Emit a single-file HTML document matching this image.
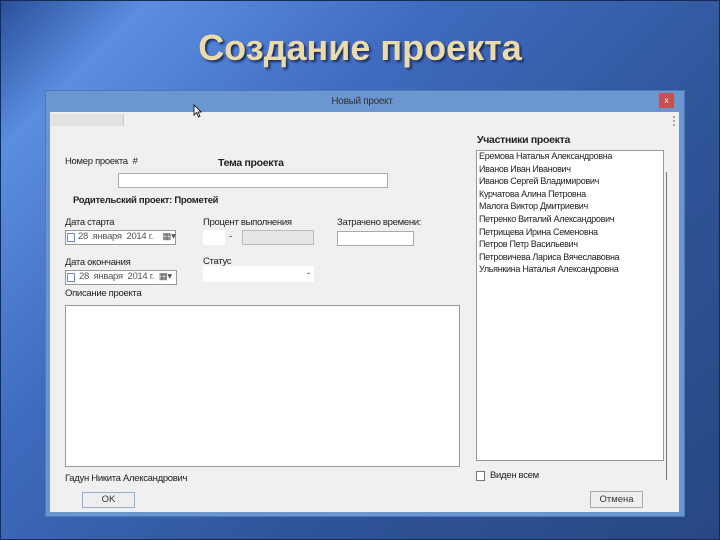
<!DOCTYPE html>
<html><head><meta charset="utf-8"><style>
*{margin:0;padding:0;box-sizing:border-box}
body{width:720px;height:540px;overflow:hidden;position:relative;font-family:"Liberation Sans","DejaVu Sans",sans-serif;
background:linear-gradient(135deg,#2a4f9a 0%,#5b8ee0 12%,#3f6bbf 35%,#2f5599 65%,#274784 100%);}
.a{position:absolute}
.t{font-size:9.5px;color:#222;white-space:nowrap;letter-spacing:-0.3px}
.b{font-weight:bold}
.box{background:#fff;border:1px solid #aaa}
</style></head><body>
<div class="a" style="left:0;top:0;width:720px;height:540px;border:1px solid #152a55"></div>
<div class="a" style="left:0;top:27px;width:720px;text-align:center;font-size:36px;font-weight:bold;color:#ecdba8;text-shadow:2px 2px 2px #1a2f60;letter-spacing:0px">Создание проекта</div>
<!-- window -->
<div class="a" style="left:45px;top:90px;width:640px;height:427px;background:#6b96cf;border:1px solid #4f79b5"></div>
<div class="a t" style="left:0;width:724px;top:96px;text-align:center;font-size:10px;color:#333">Новый проект</div>
<div class="a" style="left:659px;top:93px;width:15px;height:15px;background:#c75050;color:#fff;font-size:8px;text-align:center;line-height:15px">x</div>
<div class="a" style="left:50px;top:112px;width:629px;height:400px;background:#f0f0f0"></div>
<div class="a" style="left:51px;top:114px;width:73px;height:12px;background:#e2e2e2;border-right:1px solid #ccc"></div>
<div class="a" style="left:669px;top:116px;width:6px;height:10px;border-right:2px dotted #aaa"></div>
<!-- left -->
<div class="a t" style="left:65px;top:156px">Номер проекта &nbsp;#</div>
<div class="a t b" style="left:218px;top:157px;font-size:10.5px">Тема проекта</div>
<div class="a box" style="left:118px;top:173px;width:270px;height:15px"></div>
<div class="a t b" style="left:73px;top:195px">Родительский проект: Прометей</div>
<div class="a t" style="left:65px;top:217px">Дата старта</div>
<div class="a box" style="left:65px;top:230px;width:111px;height:15px;border-color:#999"></div>
<div class="a" style="left:67px;top:233px;width:8px;height:9px;border:1px solid #6a8fbf"></div>
<div class="a t" style="left:78px;top:231px;color:#555">28 &nbsp;января &nbsp;2014 г. &nbsp;&nbsp;&nbsp;▦▾</div>
<div class="a t" style="left:203px;top:217px">Процент выполнения</div>
<div class="a" style="left:203px;top:230px;width:22px;height:15px;background:#fff"></div>
<div class="a t" style="left:229px;top:231px">-</div>
<div class="a" style="left:242px;top:230px;width:72px;height:15px;background:#e6e6e6;border:1px solid #bbb"></div>
<div class="a t" style="left:337px;top:217px">Затрачено времени:</div>
<div class="a box" style="left:337px;top:231px;width:77px;height:15px"></div>
<div class="a t" style="left:65px;top:257px">Дата окончания</div>
<div class="a box" style="left:65px;top:270px;width:112px;height:15px;border-color:#999"></div>
<div class="a" style="left:67px;top:273px;width:8px;height:9px;border:1px solid #6a8fbf"></div>
<div class="a t" style="left:79px;top:271px;color:#555">28 &nbsp;января &nbsp;2014 г. &nbsp;▦▾</div>
<div class="a t" style="left:203px;top:256px">Статус</div>
<div class="a" style="left:203px;top:266px;width:111px;height:16px;background:#fff"></div>
<div class="a t" style="left:307px;top:268px">-</div>
<div class="a t" style="left:65px;top:288px">Описание проекта</div>
<div class="a box" style="left:65px;top:305px;width:395px;height:162px;border-color:#999"></div>
<div class="a t" style="left:65px;top:473px">Гадун Никита Александрович</div>
<div class="a" style="left:82px;top:492px;width:53px;height:16px;background:#eee;border:1px solid #8fb0d8;text-align:center;font-size:9.5px;line-height:14px;color:#333">OK</div>
<!-- right -->
<div class="a t b" style="left:477px;top:134px;font-size:10.5px">Участники проекта</div>
<div class="a box" style="left:476px;top:150px;width:188px;height:311px;border-color:#999"></div>
<div class="a t" style="left:479px;top:150px;line-height:12.6px;font-size:9px">Еремова Наталья Александровна<br>Иванов Иван Иванович<br>Иванов Сергей Владимирович<br>Курчатова Алина Петровна<br>Малога Виктор Дмитриевич<br>Петренко Виталий Александрович<br>Петрищева Ирина Семеновна<br>Петров Петр Васильевич<br>Петровичева Лариса Вячеславовна<br>Ульянкина Наталья Александровна</div>
<div class="a" style="left:666px;top:172px;width:1px;height:308px;background:#777"></div>
<div class="a" style="left:476px;top:471px;width:9px;height:10px;background:#fff;border:1px solid #777"></div>
<div class="a t" style="left:490px;top:470px">Виден всем</div>
<div class="a" style="left:590px;top:491px;width:53px;height:17px;background:#eee;border:1px solid #aaa;text-align:center;font-size:9.5px;line-height:15px;color:#333">Отмена</div>
<svg class="a" style="left:193px;top:104px" width="9" height="14" viewBox="0 0 9 14"><path d="M1 1 L1 11 L3.5 8.5 L5.5 13 L7 12.3 L5 8 L8 8 Z" fill="#fff" stroke="#000" stroke-width="0.8"/></svg>
</body></html>
